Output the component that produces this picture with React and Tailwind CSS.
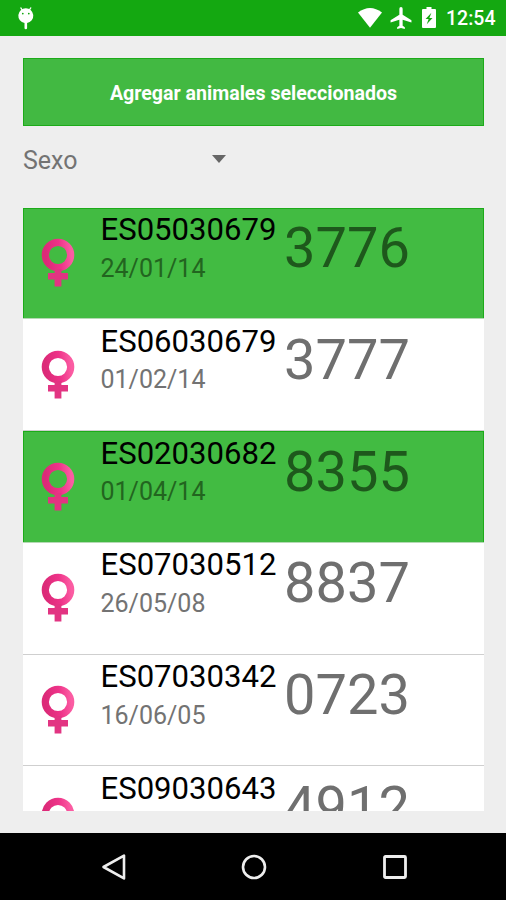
import React, { useState } from 'react';

const ANIMALS = [
  { code: 'ES05030679', date: '24/01/14', number: '3776' },
  { code: 'ES06030679', date: '01/02/14', number: '3777' },
  { code: 'ES02030682', date: '01/04/14', number: '8355' },
  { code: 'ES07030512', date: '26/05/08', number: '8837' },
  { code: 'ES07030342', date: '16/06/05', number: '0723' },
  { code: 'ES09030643', date: '', number: '4912' },
];

const FemaleIcon = () => (
  <svg width="34" height="50" viewBox="0 0 34 50" className="shrink-0">
    <defs>
      <linearGradient id="pink" x1="0" y1="0.3" x2="1" y2="0.2">
        <stop offset="0" stopColor="#dc2a78" />
        <stop offset="0.55" stopColor="#ee3389" />
        <stop offset="1" stopColor="#fb5ca2" />
      </linearGradient>
    </defs>
    <circle cx="17" cy="17" r="12.7" fill="none" stroke="url(#pink)" strokeWidth="7.2" />
    <path fill="#e23482" d="M13.6 31h6.800v3.900H27v6.500h-6.600v7.100h-6.800v-7.100H7v-6.500h6.600Z" />
  </svg>
);

const StatusBar = () => (
  <div className="flex h-[35.5px] shrink-0 items-center bg-[#14a811] pl-[17px] pr-[10px]">
    {/* Debug bridge icon */}
    <svg width="18" height="24" viewBox="0 0 18 24" className="mt-px">
      <path d="M3.600 1.500 5.500 4.500M14 1.500 12.100 4.500" stroke="#fff" strokeWidth="1.400" />
      <path
        fill="#fff"
        fillRule="evenodd"
        d="M8.800 2.300a7.400 7.400 0 0 1 1.300 14.700V22a1.300 1.300 0 0 1-2.600 0V17A7.400 7.400 0 0 1 8.800 2.300ZM5.800 6.700a.9.900 0 1 0 0 1.800.9.900 0 0 0 0-1.800Zm6 0a.9.900 0 1 0 0 1.800.9.900 0 0 0 0-1.800Z"
      />
    </svg>

    <div className="ml-auto flex items-center">
      <svg width="26" height="22" viewBox="0 0 26 22">
        <path fill="#fff" d="M1 5.600Q13-3.400 25 5.600L13 20.800Z" />
      </svg>
      <svg width="22" height="22" viewBox="2 2 19 20" className="ml-[7px]">
        <path
          fill="#fff"
          d="M21 16v-2l-8-5V3.500a1.500 1.500 0 0 0-3 0V9l-8 5v2l8-2.500V19l-2 1.500V22l3.500-1 3.500 1v-1.500L13 19v-5.500z"
        />
      </svg>
      <svg width="14" height="21" viewBox="0 0 14 21" className="ml-[10px]">
        <path
          fill="#fff"
          fillRule="evenodd"
          d="M4.500 0h5v2H13a1 1 0 0 1 1 1v17a1 1 0 0 1-1 1H1a1 1 0 0 1-1-1V3a1 1 0 0 1 1-1h3.500ZM9.400 5.800 3.600 12h3L4.800 17.200 10.500 11H7.400Z"
        />
      </svg>
      <span className="ml-[10px] mt-[2px] w-[50px] whitespace-nowrap text-[19.5px] font-medium leading-none text-white">
        12:54
      </span>
    </div>
  </div>
);

const AnimalRow = ({ animal, selected, onToggle }) => (
  <div
    onClick={onToggle}
    className={`flex h-[111.8px] shrink-0 cursor-pointer items-start border-b ${
      selected
        ? 'border-[#b5d9b4] bg-[#42bb42] shadow-[inset_1px_1px_0_#1cab19,inset_-1px_0_0_#1cab19]'
        : 'border-[#cfcfcf] bg-white'
    }`}
  >
    <div className="ml-[18px] mt-[30.5px]">
      <FemaleIcon />
    </div>
    <div className="ml-[25.5px] mt-[4.5px] w-[183.5px]">
      <div className="text-[31.1px] leading-[36px] text-black">{animal.code}</div>
      <div className={`mt-[5.5px] text-[25px] leading-[29px] ${selected ? 'text-[#22651f]' : 'text-[#737373]'}`}>
        {animal.date}
      </div>
    </div>
    <div className={`mt-[7.5px] text-[56px] leading-[66px] ${selected ? 'text-[#1e581c]' : 'text-[#6f6f6f]'}`}>
      {animal.number}
    </div>
  </div>
);

const NavBar = () => (
  <div className="flex h-[67px] shrink-0 items-center justify-center gap-[114.5px] bg-black pl-[2px]">
    <svg width="26" height="28" viewBox="0 0 26 28">
      <path d="M23 2.600v22.800L2.500 14Z" fill="none" stroke="#eee" strokeWidth="2.600" strokeLinejoin="round" />
    </svg>
    <svg width="26" height="26" viewBox="0 0 26 26">
      <circle cx="13" cy="13" r="11" fill="none" stroke="#eee" strokeWidth="2.600" />
    </svg>
    <svg width="26" height="26" viewBox="0 0 26 26">
      <rect x="2.500" y="2.500" width="21" height="21" rx="1" fill="none" stroke="#eee" strokeWidth="2.800" />
    </svg>
  </div>
);

const App = () => {
  const [selected, setSelected] = useState([0, 2]);

  const toggle = (index) => {
    setSelected((prev) => (prev.includes(index) ? prev.filter((i) => i !== index) : [...prev, index]));
  };

  return (
    <div className="flex h-[900px] w-[506px] flex-col overflow-hidden bg-[#eeeeee] font-['Roboto',sans-serif]">
      <StatusBar />

      <div className="flex min-h-0 flex-1 flex-col pb-[22.5px] pl-[23px] pr-[22px] pt-[22.5px]">
        <button className="h-[67.5px] w-full shrink-0 border border-[#1cab19] bg-[#42b942] pt-[3px] text-[19.6px] font-bold text-white">
          Agregar animales seleccionados
        </button>

        {/* Sex filter */}
        <div className="flex h-[82px] w-[203px] shrink-0 items-start justify-between pt-[20.5px]">
          <span className="text-[25px] leading-[30px] text-[#737373]">Sexo</span>
          <svg width="14" height="8" viewBox="0 0 14 8" className="mt-[9px]">
            <path d="M0 0h14L7 8Z" fill="#666" />
          </svg>
        </div>

        <div className="flex min-h-0 flex-1 flex-col overflow-hidden">
          {ANIMALS.map((animal, index) => (
            <AnimalRow
              key={animal.code}
              animal={animal}
              selected={selected.includes(index)}
              onToggle={() => toggle(index)}
            />
          ))}
        </div>
      </div>

      <NavBar />
    </div>
  );
};

export default App;
